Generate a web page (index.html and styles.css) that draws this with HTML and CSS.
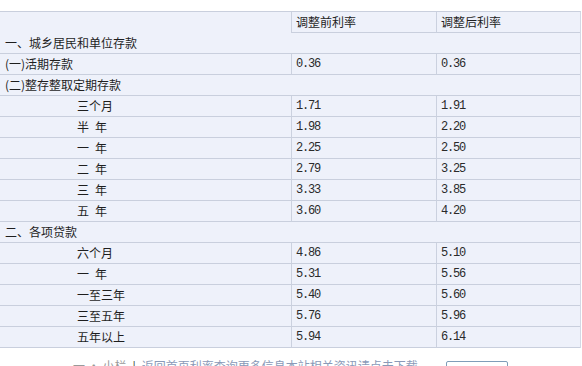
FILE: index.html
```html
<!DOCTYPE html>
<html lang="zh">
<head>
<meta charset="utf-8">
<title>存贷款利率调整表</title>
<link rel="stylesheet" href="styles.css">
</head>
<body>
<div class="page">
  <table class="rates">
    <colgroup>
      <col class="c1"><col class="c2"><col class="c3">
    </colgroup>
    <tr class="head">
      <td class="blank"></td>
      <td class="v">调整前利率</td>
      <td class="v">调整后利率</td>
    </tr>
    <tr class="sec"><td colspan="3">一、城乡居民和单位存款</td></tr>
    <tr><td class="sub">(一)活期存款</td><td class="v num">0.36</td><td class="v num">0.36</td></tr>
    <tr class="sec"><td colspan="3" class="sub">(二)整存整取定期存款</td></tr>
    <tr><td class="ind">三个月</td><td class="v num">1.71</td><td class="v num">1.91</td></tr>
    <tr><td class="ind">半&ensp;年</td><td class="v num">1.98</td><td class="v num">2.20</td></tr>
    <tr><td class="ind">一&ensp;年</td><td class="v num">2.25</td><td class="v num">2.50</td></tr>
    <tr><td class="ind">二&ensp;年</td><td class="v num">2.79</td><td class="v num">3.25</td></tr>
    <tr><td class="ind">三&ensp;年</td><td class="v num">3.33</td><td class="v num">3.85</td></tr>
    <tr><td class="ind">五&ensp;年</td><td class="v num">3.60</td><td class="v num">4.20</td></tr>
    <tr class="sec"><td colspan="3">二、各项贷款</td></tr>
    <tr><td class="ind">六个月</td><td class="v num">4.86</td><td class="v num">5.10</td></tr>
    <tr><td class="ind">一&ensp;年</td><td class="v num">5.31</td><td class="v num">5.56</td></tr>
    <tr><td class="ind">一至三年</td><td class="v num">5.40</td><td class="v num">5.60</td></tr>
    <tr><td class="ind">三至五年</td><td class="v num">5.76</td><td class="v num">5.96</td></tr>
    <tr><td class="ind">五年以上</td><td class="v num">5.94</td><td class="v num">6.14</td></tr>
  </table>
  <div class="foot">
    <span class="muted">一 · 小栏</span>
    <span class="bar">|</span>
    <span class="link">返回首页利率查询更多信息本站相关资讯请点击下载</span>
    <span class="btn">&nbsp;</span>
  </div>
</div>
</body>
</html>
```

FILE: styles.css
```css
html, body {
  margin: 0;
  padding: 0;
  background: #ffffff;
}

.page {
  width: 582px;
  height: 366px;
  overflow: hidden;
  padding-top: 11px;
  box-sizing: border-box;
  font-family: "Noto Sans CJK SC", "Noto Sans", sans-serif;
  font-size: 12px;
  color: #1e1e1e;
}

.rates {
  width: 580px;
  table-layout: fixed;
  border-collapse: separate;
  border-spacing: 0;
  background: #eef1fa;
  border-top: 1px solid #c9cfdd;
  border-right: 1px solid #d3d8e5;
}

.rates .c1 { width: 291px; }
.rates .c2 { width: 145px; }
.rates .c3 { width: 144px; }

.rates td {
  padding: 0 0 0 5px;
  line-height: 20px;
  height: 20px;
  border-bottom: 1px solid #c9cfdd;
  white-space: nowrap;
  overflow: hidden;
}

.rates .head .blank {
  border-bottom-color: transparent;
}

.rates .sub {
  padding-left: 5px;
}

.rates .ind {
  padding-left: 77px;
}

.rates .v {
  border-left: 1px solid #cbd1df;
  padding-left: 4px;
}

.rates .num {
  font-family: "Liberation Mono", "DejaVu Sans Mono", monospace;
  font-size: 12px;
  letter-spacing: -1.2px;
  color: #2a2a2a;
}

.foot {
  display: flex;
  align-items: flex-start;
  gap: 6px;
  padding-left: 73px;
  margin-top: 11px;
  line-height: 14px;
  font-size: 12px;
}

.foot .muted {
  color: #9a9a9a;
}

.foot .bar {
  color: #333333;
}

.foot .link {
  color: #8a9ab8;
}

.foot .btn {
  display: inline-block;
  width: 62px;
  height: 20px;
  margin-left: 22px;
  margin-top: 2px;
  border: 1px solid #7f9db9;
  border-radius: 2px;
  box-sizing: border-box;
}
```
